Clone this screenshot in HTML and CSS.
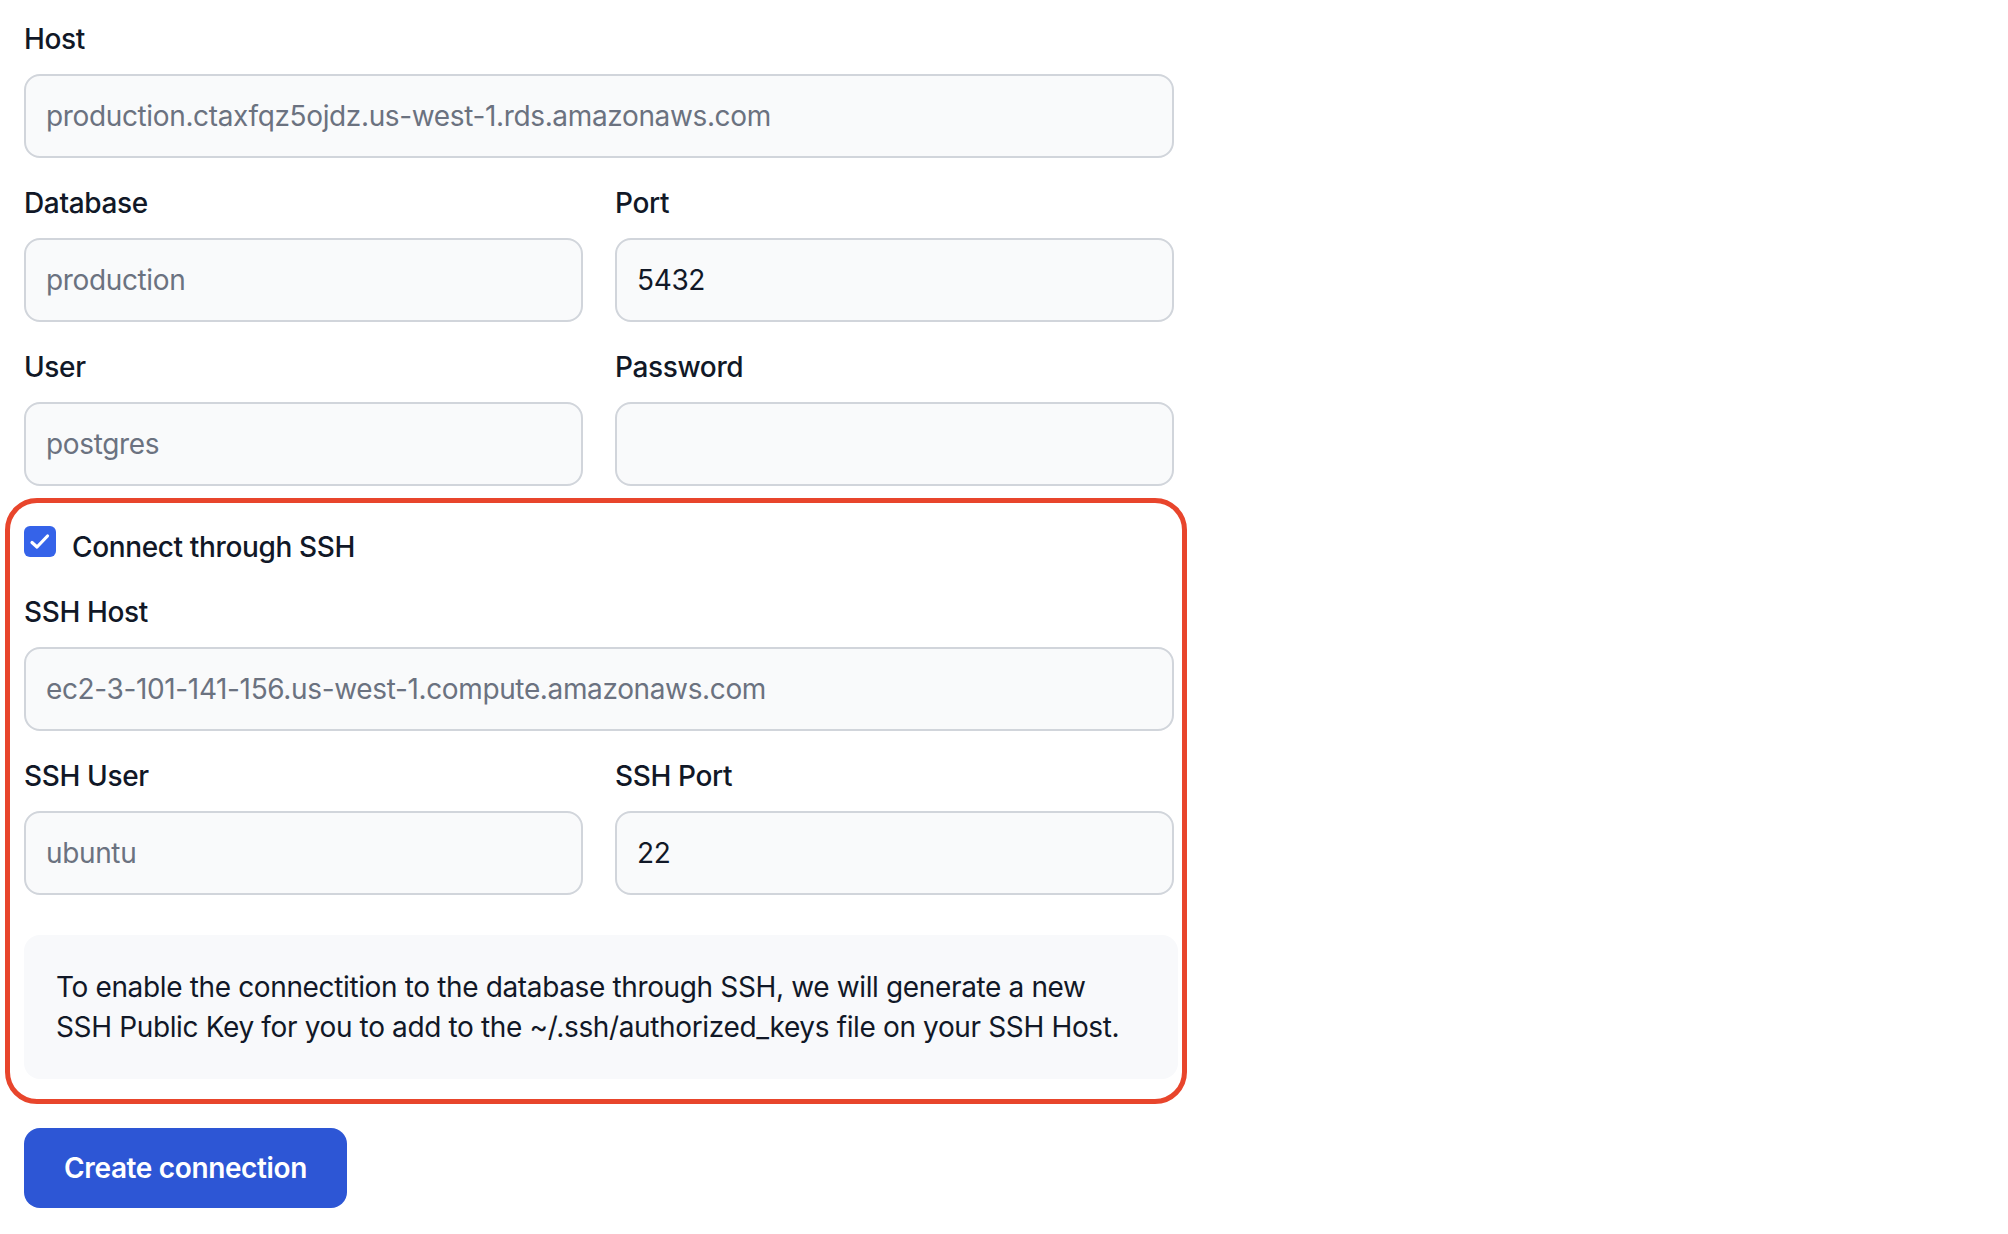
FILE: index.html
```html
<!DOCTYPE html>
<html lang="en">
<head>
<meta charset="utf-8">
<title>Create connection</title>
<link rel="stylesheet" href="styles.css">
</head>
<body>
<form class="form">
  <div class="field">
    <label class="label">Host</label>
    <div class="input placeholder">production.ctaxfqz5ojdz.us-west-1.rds.amazonaws.com</div>
  </div>
  <div class="row">
    <div class="field">
      <label class="label">Database</label>
      <div class="input placeholder">production</div>
    </div>
    <div class="field">
      <label class="label">Port</label>
      <div class="input">5432</div>
    </div>
  </div>
  <div class="row">
    <div class="field">
      <label class="label">User</label>
      <div class="input placeholder">postgres</div>
    </div>
    <div class="field">
      <label class="label">Password</label>
      <div class="input"></div>
    </div>
  </div>

  <section class="ssh">
    <div class="check-row">
      <span class="checkbox">
        <svg width="32" height="31" viewBox="0 0 32 31" aria-hidden="true">
          <path d="M8 16.5 L13 21 L23.5 10" fill="none" stroke="#ffffff" stroke-width="3.2" stroke-linecap="round" stroke-linejoin="round"/>
        </svg>
      </span>
      <span class="check-label">Connect through SSH</span>
    </div>
    <div class="field">
      <label class="label">SSH Host</label>
      <div class="input placeholder">ec2-3-101-141-156.us-west-1.compute.amazonaws.com</div>
    </div>
    <div class="row">
      <div class="field">
        <label class="label">SSH User</label>
        <div class="input placeholder">ubuntu</div>
      </div>
      <div class="field">
        <label class="label">SSH Port</label>
        <div class="input">22</div>
      </div>
    </div>
    <div class="info">
      <p class="info-line">To enable the connectition to the database through SSH, we will generate a new</p>
      <p class="info-line">SSH Public Key for you to add to the ~/.ssh/authorized_keys file on your SSH Host.</p>
    </div>
  </section>

  <div class="actions">
    <button type="button" class="button">Create connection</button>
  </div>
</form>
</body>
</html>
```

FILE: styles.css
```css
* {
  box-sizing: border-box;
}

html, body {
  background: #ffffff;
}

body {
  margin: 0;
  padding: 18px 24px;
  font-family: "Inter", "Liberation Sans", sans-serif;
  letter-spacing: -0.36px;
  color: #111827;
}

.form {
  width: 1150px;
  display: flex;
  flex-direction: column;
  gap: 24px;
}

.field {
  display: flex;
  flex-direction: column;
  gap: 16px;
}

.row {
  display: grid;
  grid-template-columns: 1fr 1fr;
  column-gap: 32px;
}

.label {
  font-size: 28px;
  line-height: 40px;
  font-weight: 500;
  color: #111827;
  padding-top: 1px;
  margin-bottom: -1px;
}

.input {
  height: 84px;
  border: 2px solid #d1d5db;
  border-radius: 16px;
  background: #f9fafb;
  padding: 0 20px;
  display: flex;
  align-items: center;
  font-size: 28px;
  line-height: 40px;
  color: #111827;
  white-space: nowrap;
}

.placeholder {
  color: #6b7280;
}

.ssh {
  margin: -12px -13px 0 -19px;
  border: 5px solid #e8452c;
  border-radius: 32px;
  padding: 23px 8px 20px 14px;
  display: flex;
  flex-direction: column;
  gap: 24px;
}

.check-row {
  display: flex;
  align-items: flex-start;
  gap: 16px;
}

.checkbox {
  width: 32px;
  height: 31px;
  border-radius: 6px;
  background: #3563e9;
  display: block;
  flex: none;
}

.checkbox svg {
  display: block;
}

.check-label {
  font-size: 28px;
  line-height: 40px;
  font-weight: 500;
  color: #111827;
  padding-top: 1px;
}

.info {
  margin-top: 16px;
  margin-right: -4px;
  background: #f8f9fb;
  border-radius: 16px;
  padding: 32px;
  font-size: 28px;
  line-height: 40px;
  color: #111827;
}

.info-line {
  margin: 0;
  white-space: nowrap;
}

.actions {
  display: flex;
}

.button {
  height: 80px;
  padding: 0 40px;
  border: none;
  border-radius: 16px;
  background: #2d56d5;
  color: #ffffff;
  font-family: inherit;
  font-size: 28px;
  font-weight: 600;
  line-height: 40px;
  letter-spacing: -0.36px;
}
```
